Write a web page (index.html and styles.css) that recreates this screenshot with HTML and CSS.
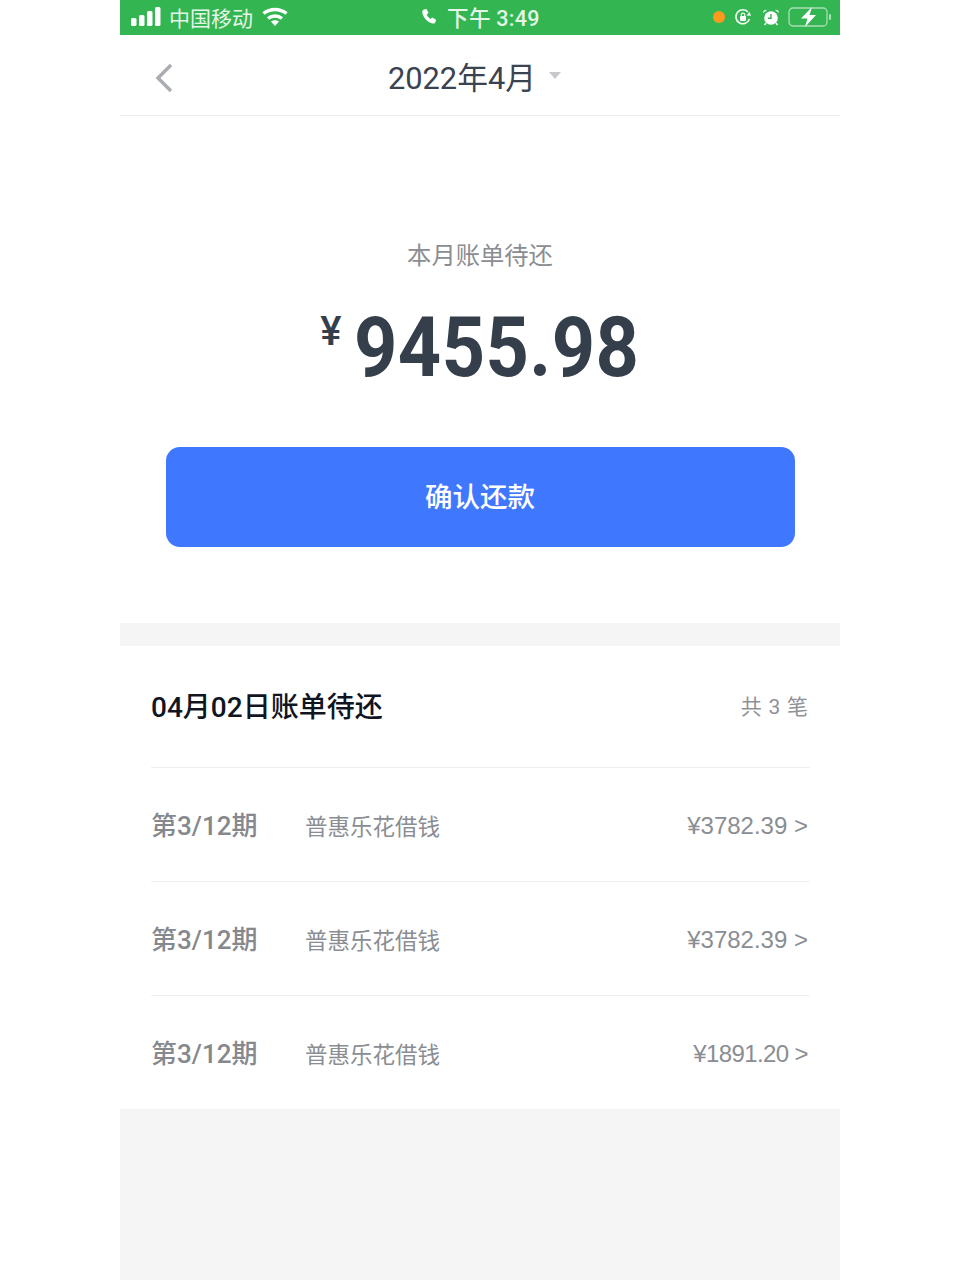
FILE: index.html
```html
<!DOCTYPE html>
<html lang="zh-CN">
<head>
  <meta charset="UTF-8" />
  <meta name="viewport" content="width=device-width, initial-scale=1" />
  <title>本月账单</title>
  <link rel="stylesheet" href="styles.css">
</head>
<body>
  <div class="phone">

    <!-- Status bar -->
    <div class="status">
      <div class="status-left">
        <svg class="signal" width="30" height="19" viewBox="0 0 30 19"><rect x="0" y="11" width="5.500" height="8" rx="1.500"/><rect x="8" y="8" width="5.500" height="11" rx="1.500"/><rect x="16" y="4" width="5.500" height="15" rx="1.500"/><rect x="24" y="0" width="5.500" height="19" rx="1.500"/></svg>
        <span class="carrier">中国移动</span>
        <svg class="wifi" width="26" height="19" viewBox="0 0 26 19" fill="none" stroke="#fff" stroke-width="3.500"><path d="M1.500 6.500C8 1 18 1 24.500 6.500"/><path d="M6 11.500c4-3.200 10-3.200 14 0"/><path d="M13 19l-4-4.500c2.200-1.600 5.800-1.600 8 0z" fill="#fff" stroke="none"/></svg>
      </div>
      <div class="status-center">
        <svg width="18" height="18" viewBox="0 0 18 18"><path d="M4 1.500l2.500-.5 2 4-1.800 1.600c.6 1.900 2 3.500 3.900 4.400l1.700-1.500 3.700 2.300-.6 2.400c-.4 1-1.500 1.600-2.600 1.300C7.500 14.500 3.200 9.800 2.300 4.500 2.100 3.200 2.800 2 4 1.500z" fill="#fff"/></svg>
        <span class="clock">下午 3:49</span>
      </div>
      <div class="status-right">
        <span class="dot"></span>
        <svg class="lock" width="18" height="18" viewBox="0 0 18 18" fill="none" stroke="#eef9f0" stroke-width="1.600"><path d="M15.500 11A7 7 0 1 1 14 4"/><path d="M12.500 7.500l4.500.2-1.500-3.700z" fill="#fff" stroke="none"/><rect x="6" y="8" width="6" height="5" rx="1" fill="#fff" stroke="none"/><path d="M7.300 8V6.800a1.700 1.700 0 0 1 3.400 0V8" stroke-width="1.200"/></svg>
        <svg class="alarm" width="18" height="18" viewBox="0 0 18 18"><circle cx="9" cy="10" r="6.800" fill="#fff"/><path d="M1 5a3 3 0 0 1 4-3z" fill="#fff"/><path d="M17 5a3 3 0 0 0-4-3z" fill="#fff"/><path d="M9 6v4.200H5.800" fill="none" stroke="#33b552" stroke-width="1.400"/><path d="M4 15l-1.500 2M14 15l1.500 2" stroke="#fff" stroke-width="1.500"/></svg>
        <svg width="44" height="20" viewBox="0 0 44 20"><rect x="1" y="1" width="38" height="18" rx="4" fill="none" stroke="#a9e0b6" stroke-width="1.300"/><rect x="41" y="7" width="2" height="6" rx="1" fill="#a9e0b6"/><path d="M24 0L13 11.500h6.500L17 20l11-12h-6.500z" fill="#fff"/></svg>
      </div>
    </div>

    <!-- Nav -->
    <div class="nav">
      <svg class="back" width="20" height="30" viewBox="0 0 20 30" fill="none" stroke="#a9acb0" stroke-width="3.400"><path d="M17 2L4 15l13 13"/></svg>
      <div class="nav-title">2022年4月<span class="caret"></span></div>
    </div>

    <!-- Summary -->
    <div class="summary">
      <div class="summary-label">本月账单待还</div>
      <div class="amount"><span class="yen">¥</span><span class="num">9455.98</span></div>
      <button class="pay-btn"><span class="pay-text">确认还款</span></button>
    </div>

    <!-- Bill list -->
    <div class="bill">
      <div class="bill-head">
        <div class="bill-title">04月02日账单待还</div>
        <div class="bill-count">共 3 笔</div>
      </div>
      <div class="row">
        <div class="period">第3/12期</div>
        <div class="name">普惠乐花借钱</div>
        <div class="money">¥3782.39 &gt;</div>
      </div>
      <div class="row">
        <div class="period">第3/12期</div>
        <div class="name">普惠乐花借钱</div>
        <div class="money">¥3782.39 &gt;</div>
      </div>
      <div class="row">
        <div class="period">第3/12期</div>
        <div class="name">普惠乐花借钱</div>
        <div class="money money-narrow">¥1891.20 &gt;</div>
      </div>
    </div>

  </div>
</body>
</html>
```

FILE: styles.css
```css
body {
  margin: 0;
  background-color: #fff;
  font-family: Roboto, "Noto Sans CJK SC", sans-serif;
}

.phone {
  width: 720px;
  height: 1280px;
  margin: 0 auto;
  background-color: #f5f5f5;
  overflow: hidden;
}

/* Status bar */
.status {
  height: 35px;
  padding-bottom: 2px;
  box-sizing: border-box;
  background-color: #33b552;
  color: #e4f6e8;
  display: grid;
  grid-template-columns: 1fr auto 1fr;
  align-items: center;
  font-size: 21px;
}

.status-left {
  display: flex;
  align-items: center;
  padding-left: 11px;
}

.signal {
  fill: #fff;
  margin-right: 8px;
}

.carrier {
  margin-right: 9px;
}

.status-center {
  display: flex;
  align-items: center;
  gap: 9px;
}

.clock {
  font-size: 21.500px;
  font-weight: 500;
  letter-spacing: 0.300px;
}

.status-right {
  display: flex;
  align-items: center;
  justify-content: flex-end;
  padding-right: 8px;
}

.dot {
  width: 12px;
  height: 12px;
  border-radius: 50%;
  background-color: #ff9a1f;
  margin-right: 9px;
}

.lock {
  margin-right: 10px;
}

.alarm {
  margin-right: 8px;
}

/* Nav */
.nav {
  height: 80px;
  background-color: #fff;
  border-bottom: 1px solid #ececec;
  display: flex;
  align-items: center;
  justify-content: center;
  position: relative;
}

.back {
  position: absolute;
  left: 34px;
  top: 28px;
}

.nav-title {
  font-size: 30.800px;
  color: #3a4350;
  display: flex;
  align-items: center;
  padding-right: 11px;
}

.caret {
  width: 0;
  height: 0;
  margin-left: 13px;
  border-left: 6px solid transparent;
  border-right: 6px solid transparent;
  border-top: 7px solid #c6c8cb;
}

/* Summary */
.summary {
  height: 507px;
  background-color: #fff;
  display: flex;
  flex-direction: column;
  align-items: center;
  padding-top: 123px;
  box-sizing: border-box;
}

.summary-label {
  font-size: 24.300px;
  line-height: 34px;
  color: #8a8d91;
}

.amount {
  display: flex;
  align-items: flex-start;
  margin-top: 26px;
  color: #353e4b;
}

.yen {
  font-size: 40px;
  font-weight: 500;
  line-height: 42px;
  margin-top: 12px;
  margin-right: 12px;
}

.num {
  font-size: 84px;
  font-weight: 700;
  line-height: 98px;
  letter-spacing: 0.500px;
  transform: scaleX(0.9);
  transform-origin: left;
  margin-right: -31px;
}

.pay-btn {
  width: 629px;
  height: 100px;
  margin-top: 50px;
  padding: 0 0 4px;
  border: none;
  border-radius: 14px;
  background-color: #3f78ff;
  color: #fff;
  font-family: inherit;
  font-size: 27.500px;
  font-weight: 500;
}

/* Bill list */
.bill {
  margin-top: 23px;
  background-color: #fff;
  padding: 0 30px 0 31px;
}

.bill-head {
  height: 121px;
  padding-bottom: 3px;
  box-sizing: border-box;
  display: flex;
  align-items: center;
  justify-content: space-between;
}

.bill-title {
  font-size: 28px;
  font-weight: 500;
  color: #10151f;
}

.bill-count {
  font-size: 21px;
  word-spacing: 1.500px;
  color: #8e9196;
  padding-right: 2px;
}

.row {
  height: 114px;
  border-top: 1px solid #efefef;
  box-sizing: border-box;
  display: flex;
  align-items: center;
}

.period {
  width: 154px;
  font-size: 26px;
  font-weight: 500;
  color: #85888d;
  padding-bottom: 2px;
}

.name {
  flex: 1;
  font-size: 22.500px;
  color: #8a8d92;
}

.money {
  font-family: "Liberation Sans", sans-serif;
  font-size: 24px;
  color: #8a8d92;
  padding: 3px 2px 0 0;
}

.money-narrow {
  letter-spacing: -0.600px;
}
```
